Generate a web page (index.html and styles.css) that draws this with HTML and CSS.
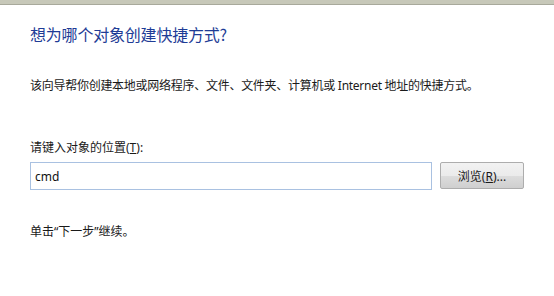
FILE: index.html
```html
<!DOCTYPE html>
<html lang="zh-CN">
<head>
<meta charset="utf-8">
<title>创建快捷方式</title>
<link rel="stylesheet" href="styles.css">
</head>
<body>
<div class="topbar"></div>
<div class="content">
  <h1 class="title">想为哪个对象创建快捷方式?</h1>
  <p class="desc">该向导帮你创建本地或网络程序、文件、文件夹、计算机或 Internet 地址的快捷方式。</p>
  <label class="label" for="loc">请键入对象的位置(<u>T</u>):</label>
  <div class="row">
    <input id="loc" class="field" type="text" value="cmd">
    <button class="btn" type="button">浏览(<u>R</u>)...</button>
  </div>
  <p class="hint">单击“下一步”继续。</p>
</div>
</body>
</html>
```

FILE: styles.css
```css
html, body {
  margin: 0;
  padding: 0;
  background: #ffffff;
}
body {
  font-family: "Noto Sans", "Noto Sans CJK SC", sans-serif;
  color: #1a1a1a;
  font-size: 12px;
}
.topbar {
  height: 4px;
  background: #c7c8b9;
  border-bottom: 1px solid #a8a99b;
}
.content {
  padding: 0 30px;
  display: flex;
  flex-direction: column;
  align-items: flex-start;
}
.title {
  margin: 19px 0 0 0;
  font-size: 16px;
  line-height: 20px;
  letter-spacing: -0.2px;
  font-weight: normal;
  color: #1e3c96;
  font-family: "Noto Sans CJK SC", sans-serif;
}
.desc {
  margin: 34px 0 0 0;
  line-height: 16px;
  font-size: 12px;
  letter-spacing: -0.27px;
}
.label {
  margin-top: 46px;
  line-height: 16px;
  font-size: 12px;
}
.row {
  margin-top: 6px;
  display: flex;
  gap: 8px;
  align-items: flex-start;
}
.field {
  box-sizing: border-box;
  width: 402px;
  height: 28px;
  margin: 0;
  border: 1px solid #a9c1e1;
  padding: 0 0 0 4px;
  font-family: "Noto Sans", "Noto Sans CJK SC", sans-serif;
  font-size: 12px;
  color: #111;
  outline: none;
  background: #fff;
}
.btn {
  box-sizing: border-box;
  width: 84px;
  height: 27px;
  margin: 0;
  border: 1px solid #adadad;
  border-radius: 2px;
  background: linear-gradient(#f2f2f2 0%, #ebebeb 50%, #dddddd 51%, #cfcfcf 100%);
  font-family: "Noto Sans", "Noto Sans CJK SC", sans-serif;
  font-size: 12px;
  color: #1a1a1a;
  padding: 0;
}
.hint {
  margin: 34px 0 0 0;
  line-height: 16px;
  font-size: 12px;
}
```
